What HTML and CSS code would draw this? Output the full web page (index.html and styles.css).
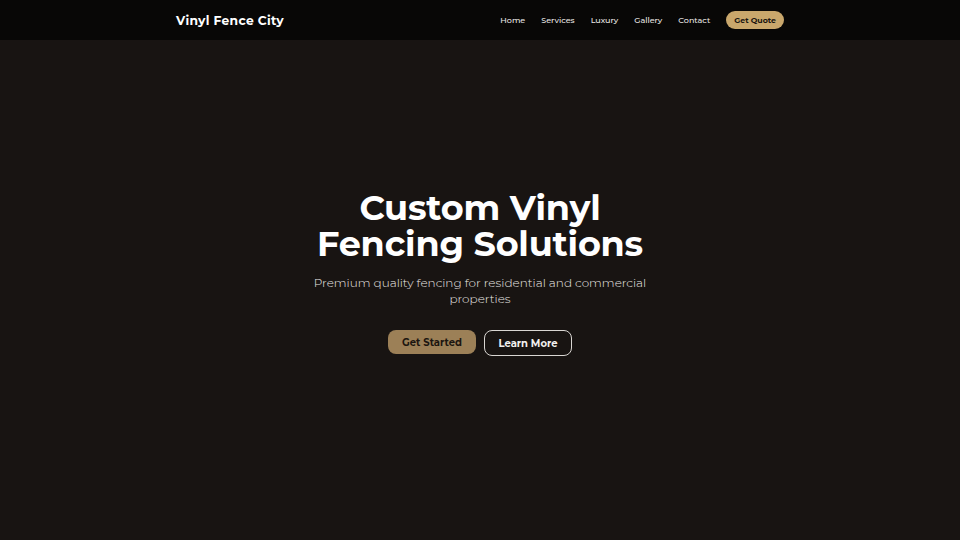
FILE: index.html
```html
<!DOCTYPE html>
<html lang="en">
<head>
<meta charset="utf-8">
<title>Vinyl Fence City</title>
<link rel="stylesheet" href="styles.css">
</head>
<body>
<header class="nav">
  <div class="nav-inner">
    <a class="logo" href="#">Vinyl Fence City</a>
    <nav class="links">
      <a href="#">Home</a>
      <a href="#">Services</a>
      <a href="#">Luxury</a>
      <a href="#">Gallery</a>
      <a href="#">Contact</a>
      <a class="quote" href="#">Get Quote</a>
    </nav>
  </div>
</header>
<main class="hero">
  <div class="hero-content">
    <h1 class="title">Custom Vinyl<br>Fencing Solutions</h1>
    <p class="subtitle">Premium quality fencing for residential and commercial properties</p>
    <div class="actions">
      <a class="btn btn-gold" href="#">Get Started</a>
      <a class="btn btn-outline" href="#">Learn More</a>
    </div>
  </div>
</main>
</body>
</html>
```
FILE: styles.css
```css
* { box-sizing: border-box; }
html, body { margin: 0; padding: 0; }
body {
  background: #181412;
  font-family: "Montserrat", "Open Sans", "DejaVu Sans", sans-serif;
  color: #fff;
  height: 540px;
  overflow: hidden;
}
a { text-decoration: none; color: inherit; }
.nav {
  background: #080706;
  height: 40px;
}
.nav-inner {
  width: 608px;
  margin: 0 auto;
  height: 40px;
  display: flex;
  align-items: center;
  justify-content: space-between;
}
.logo {
  font-weight: 700;
  font-size: 12.3px;
  letter-spacing: 0.3px;
  color: #fff;
}
.links {
  display: flex;
  align-items: center;
  gap: 16px;
  font-size: 8px;
  font-weight: 500;
  color: #ebe9e6;
}
.quote {
  background: #c9a76c;
  color: #1a1510;
  font-weight: 700;
  font-size: 7.8px;
  padding: 0 8px;
  height: 18px;
  line-height: 18px;
  border-radius: 9px;
}
.hero {
  height: 500px;
  display: flex;
  justify-content: center;
}
.hero-content {
  padding-top: 150px;
  text-align: center;
  width: 400px;
}
.title {
  margin: 0;
  font-size: 35px;
  line-height: 36px;
  font-weight: 700;
  letter-spacing: -0.2px;
}
.subtitle {
  margin: 13px auto 0;
  width: 345px;
  font-size: 12px;
  line-height: 16px;
  font-weight: 300;
  color: #ece9e5;
}
.actions {
  margin-top: 23px;
  display: flex;
  justify-content: center;
  gap: 8px;
}
.btn {
  display: inline-flex;
  align-items: center;
  justify-content: center;
  font-size: 10px;
  font-weight: 700;
  border-radius: 8px;
}
.btn-gold {
  width: 88px;
  height: 24px;
  background: #9c8057;
  color: #1c1610;
}
.btn-outline {
  width: 88px;
  height: 26px;
  border: 1.5px solid #d9d6d2;
  color: #f2f0ee;
}
```
